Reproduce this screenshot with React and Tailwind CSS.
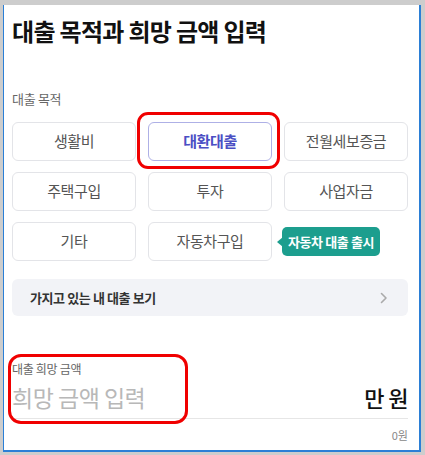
import React from "react";

const font = { fontFamily: '"Noto Sans CJK KR", "Noto Sans", sans-serif' };

const PURPOSES = [
  ["생활비", "대환대출", "전월세보증금"],
  ["주택구입", "투자", "사업자금"],
  ["기타", "자동차구입", null],
];

const PurposeButton = ({ label, selected }) => (
  <button
    className={`h-[39px] rounded-[6px] border text-[15px] tracking-[-0.4px] ${
      selected
        ? "border-[#aeb0e6] text-[#4b4fc4] font-semibold"
        : "border-[#e3e4e8] text-[#555]"
    }`}
  >
    {label}
  </button>
);

const App = () => {
  return (
    <div
      className="w-[425px] h-[455px] bg-[#cdcdcd] pt-[5px] pl-[3px] pr-[4px] pb-[3px]"
      style={font}
    >
      <div className="relative h-full bg-white border-l border-r-2 border-b-2 border-[#2b7fd6] pl-[8px] pr-[11px]">
        {/* TITLE */}
        <h1 className="pt-[10px] text-[24px] font-bold tracking-[-0.7px] text-[#111] leading-[32px]">
          대출 목적과 희망 금액 입력
        </h1>

        {/* PURPOSE */}
        <p className="mt-[43px] text-[13px] text-[#666] tracking-[-0.3px] leading-[18px]">
          대출 목적
        </p>

        <div className="mt-[14px] grid grid-cols-3 gap-x-[12px] gap-y-[11px]">
          {PURPOSES.flat().map((label, i) =>
            label ? (
              <PurposeButton key={i} label={label} selected={label === "대환대출"} />
            ) : (
              <div key={i} className="flex items-center">
                <div className="relative ml-[-2px] flex items-center h-[29px] px-[6px] rounded-[5px] bg-[#1c9e8e] text-white text-[13px] font-bold tracking-[-0.4px]">
                  <span className="absolute left-[-5px] top-[10px] w-0 h-0 border-y-[5px] border-y-transparent border-r-[6px] border-r-[#1c9e8e]" />
                  자동차 대출 출시
                </div>
              </div>
            )
          )}
        </div>

        {/* MY LOANS */}
        <div className="mt-[18px] h-[37px] rounded-[6px] bg-[#f2f3f7] flex items-center justify-between pl-[18px] pr-[20px]">
          <span className="text-[13px] font-semibold text-[#333] tracking-[-0.4px]">
            가지고 있는 내 대출 보기
          </span>
          <svg width="8" height="12" viewBox="0 0 8 12" fill="none">
            <path d="M1.5 1.5L6 6l-4.5 4.5" stroke="#aaa" strokeWidth="1.6" strokeLinecap="round" strokeLinejoin="round" />
          </svg>
        </div>

        {/* AMOUNT */}
        <p className="mt-[45px] text-[12px] text-[#666] tracking-[-0.3px] leading-[16px]">
          대출 희망 금액
        </p>

        <div className="mt-[6px] flex items-end justify-between border-b border-[#e6e6e6] pb-[7px]">
          <span className="text-[23px] text-[#b8b8b8] tracking-[-0.5px] leading-[28px]">
            희망 금액 입력
          </span>
          <span className="text-[22px] font-medium text-[#111] tracking-[-0.6px] leading-[28px]">
            만 원
          </span>
        </div>

        <p className="mt-[8px] text-right text-[11px] text-[#888] leading-[16px]">0원</p>

        {/* HIGHLIGHTS */}
        <div className="absolute left-[133px] top-[107px] w-[143px] h-[57px] rounded-[11px] border-[3px] border-[#f00000] pointer-events-none" />
        <div className="absolute left-[4px] top-[349px] w-[180px] h-[70px] rounded-[13px] border-[3px] border-[#f00000] pointer-events-none" />
      </div>
    </div>
  );
};

export default App;
